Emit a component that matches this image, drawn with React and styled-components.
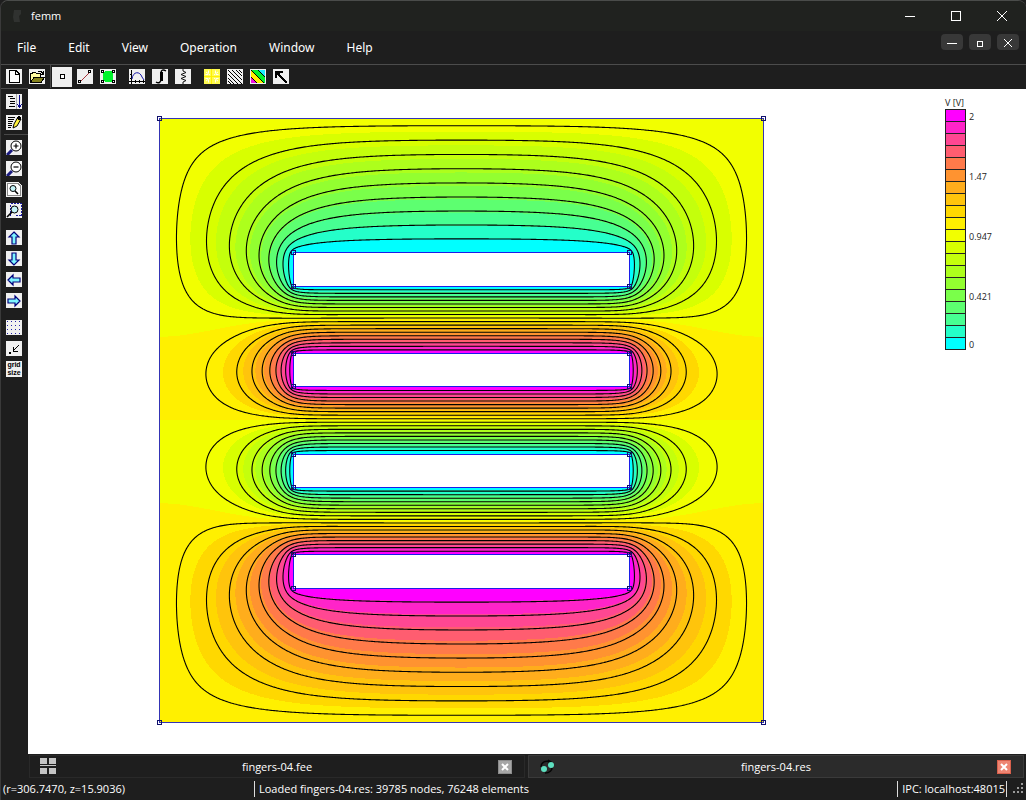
import React, { useMemo } from "react";
import styled, { createGlobalStyle } from "styled-components";

const BAND_COLORS = [
  "#00ffff",
  "#24ffc9",
  "#47ff92",
  "#5dff70",
  "#7aff4a",
  "#93ff30",
  "#adff1c",
  "#c4ff0c",
  "#d8ff00",
  "#f2ff00",
  "#fff000",
  "#ffd800",
  "#ffc40c",
  "#ffad1c",
  "#ff9330",
  "#ff7a4a",
  "#ff5d70",
  "#ff4792",
  "#ff24c9",
  "#ff00ff",
];

const LEGEND_LABELS = { 0: "2", 5: "1.47", 10: "0.947", 15: "0.421", 19: "0" };

// The box is 18 x 18 units, each finger is 10 x 1 units.
const UNITS = 18;
const CELLS = 24;
const HALF = (UNITS / 2) * CELLS;
const SIZE = 604;
const SCALE = SIZE / (HALF * 2);
const FINGERS = [4, 7, 10, 13];

// Laplace solution (successive over-relaxation) on the upper left quarter.
// Stored as potential minus one: zero on the frame, symmetric in x, odd in y.
function solveQuarter() {
  const n = HALF + 1;
  const u = new Float64Array(n * n);
  const fixed = new Uint8Array(n * n);
  for (let j = 0; j < n; j++) {
    for (let i = 0; i < n; i++) {
      const k = j * n + i;
      if (i === 0 || j === 0 || j === HALF) fixed[k] = 1;
      if (i >= 4 * CELLS) {
        if (j >= 4 * CELLS && j <= 5 * CELLS) {
          fixed[k] = 1;
          u[k] = -1;
        }
        if (j >= 7 * CELLS && j <= 8 * CELLS) {
          fixed[k] = 1;
          u[k] = 1;
        }
      }
    }
  }
  const omega = 2 / (1 + Math.sin(Math.PI / HALF));
  for (let step = 0; step < 500; step++) {
    for (let j = 1; j < HALF; j++) {
      for (let i = 1; i < n; i++) {
        const k = j * n + i;
        if (fixed[k]) continue;
        const right = i === HALF ? u[k - 1] : u[k + 1];
        const next = (u[k - 1] + right + u[k - n] + u[k + n]) / 4;
        u[k] += omega * (next - u[k]);
      }
    }
  }
  return u;
}

function buildField() {
  const u = solveQuarter();
  const n = HALF + 1;
  const at = (i, j) => {
    const x = i > HALF ? 2 * HALF - i : i;
    return j > HALF ? 1 - u[(2 * HALF - j) * n + x] : 1 + u[j * n + x];
  };

  const bands = BAND_COLORS.map(() => []);
  for (let y = 0; y < SIZE; y++) {
    const gy = (y + 0.5) / SCALE;
    const j = Math.floor(gy);
    const fy = gy - j;
    let start = 0;
    let current = -1;
    for (let x = 0; x <= SIZE; x++) {
      let band = -2;
      if (x < SIZE) {
        const gx = (x + 0.5) / SCALE;
        const i = Math.floor(gx);
        const fx = gx - i;
        const v =
          (at(i, j) * (1 - fx) + at(i + 1, j) * fx) * (1 - fy) +
          (at(i, j + 1) * (1 - fx) + at(i + 1, j + 1) * fx) * fy;
        band = Math.max(0, Math.min(19, Math.floor(v * 10)));
      }
      if (band !== current) {
        if (current >= 0) {
          bands[current].push(`M${start} ${y}h${x - start}v1h${start - x}z`);
        }
        start = x;
        current = band;
      }
    }
  }

  const lines = [];
  for (let m = 1; m < 19; m++) {
    const level = (2 * m) / 19;
    for (let j = 0; j < 2 * HALF; j++) {
      for (let i = 0; i < 2 * HALF; i++) {
        const a = at(i, j) - level;
        const b = at(i + 1, j) - level;
        const c = at(i + 1, j + 1) - level;
        const d = at(i, j + 1) - level;
        const points = [];
        if (a > 0 !== b > 0) points.push([i + a / (a - b), j]);
        if (b > 0 !== c > 0) points.push([i + 1, j + b / (b - c)]);
        if (c > 0 !== d > 0) points.push([i + d / (d - c), j + 1]);
        if (d > 0 !== a > 0) points.push([i, j + a / (a - d)]);
        for (let p = 0; p + 1 < points.length; p += 2) {
          const [s, t] = [points[p], points[p + 1]].map(([x, y]) =>
            [(x * SCALE).toFixed(2), (y * SCALE).toFixed(2)].join(" ")
          );
          lines.push(`M${s}L${t}`);
        }
      }
    }
  }

  return { bands: bands.map((runs) => runs.join("")), lines: lines.join("") };
}

function Node({ x, y }) {
  return (
    <rect
      x={x - 2}
      y={y - 2}
      width="4"
      height="4"
      fill="none"
      stroke="#10106c"
    />
  );
}

function FieldPlot() {
  const field = useMemo(buildField, []);
  const left = Math.round((4 * SIZE) / UNITS);
  const right = SIZE - left;
  const corners = [
    [0, 0],
    [SIZE, 0],
    [0, SIZE],
    [SIZE, SIZE],
  ];
  const fingers = FINGERS.map((row) => [
    Math.round((row * SIZE) / UNITS),
    Math.round(((row + 1) * SIZE) / UNITS),
  ]);
  return (
    <Plot
      viewBox="-3 -3 611 611"
      role="img"
      aria-label="Potential of fingers-04.res"
      shapeRendering="crispEdges"
    >
      {field.bands.map((d, index) => (
        <path key={BAND_COLORS[index]} d={d} fill={BAND_COLORS[index]} />
      ))}
      <g transform="translate(0.5 0.5)" fill="none">
        <path
          d={field.lines}
          stroke="#000"
          strokeWidth="1.1"
          strokeLinecap="round"
          shapeRendering="auto"
        />
        <rect width={SIZE} height={SIZE} stroke="#3434b4" />
        {fingers.map(([top, bottom]) => (
          <rect
            key={top}
            x={left}
            y={top}
            width={right - left}
            height={bottom - top}
            fill="#fff"
            stroke="#1c1ce8"
          />
        ))}
        {corners.map(([x, y]) => (
          <Node key={`${x}-${y}`} x={x} y={y} />
        ))}
        {fingers.flat().map((y) => (
          <React.Fragment key={y}>
            <Node x={left} y={y} />
            <Node x={right} y={y} />
          </React.Fragment>
        ))}
      </g>
    </Plot>
  );
}

function Magnifier({ children }) {
  return (
    <g fill="none" stroke="#000" shapeRendering="auto">
      <circle cx="10" cy="6" r="5" fill="#fff" />
      {children}
      <path d="M1 15L6 10" stroke="#1b1b80" strokeWidth="3" />
    </g>
  );
}

function BlockArrow({ angle }) {
  return (
    <path
      d="M8 2L13 7H10V14H6V7H3Z"
      transform={`rotate(${angle} 8 8)`}
      fill="#7df4ff"
      stroke="#00007c"
      strokeWidth="1.2"
      shapeRendering="auto"
    />
  );
}

const ICONS = {
  new: (
    <path d="M3.5 1.5H10L13.5 5V13.5H3.5ZM9.5 1.5V5.5H13.5" fill="#fff" stroke="#000" />
  ),
  open: (
    <g stroke="#000">
      <path d="M1.5 13.5V4.5H3L4 3.5H6.5L7.5 4.5H11.5V7.5" fill="#fffba0" />
      <path d="M1.5 13.5L5 8.5H15.5L12 13.5Z" fill="#85821c" />
      <path d="M9 2.5H12L14 4.5M14.5 2V5.5H11" fill="none" />
    </g>
  ),
  point: <rect x="6.5" y="5.5" width="4" height="4" fill="#fff" stroke="#000" />,
  segment: (
    <g fill="#fff" stroke="#000">
      <path d="M3 13L13 3" stroke="#a8323a" />
      <rect x="1.5" y="11.5" width="2" height="2" />
      <rect x="11.5" y="1.5" width="2" height="2" />
    </g>
  ),
  block: (
    <g fill="#fff" stroke="#000">
      <path d="M5 2H11L13 4V11L11 13H5L3 11V4Z" fill="#00f52c" stroke="none" />
      <rect x="1.5" y="1.5" width="2" height="2" />
      <rect x="12.5" y="1.5" width="2" height="2" />
      <rect x="1.5" y="11.5" width="2" height="2" />
      <rect x="12.5" y="11.5" width="2" height="2" />
    </g>
  ),
  graph: (
    <g fill="none">
      <path d="M2.5 1V15M0 12.5H16M1 5H3M1 9H3M6.5 11V14M10.5 11V14M14.5 11V14" stroke="#000" />
      <path d="M3 10C4 2 11 2 13 8L15 11" stroke="#1414a8" shapeRendering="auto" />
    </g>
  ),
  integral: (
    <g fill="none" stroke="#000" shapeRendering="auto">
      <path d="M14 2C11 0 9 1 9 4V10C9 13 7 15 4 13" strokeWidth="1.5" />
      <path d="M9.5 3V12" strokeWidth="3" />
    </g>
  ),
  circuit: (
    <path
      d="M8 0V2L11 3.500L6 5.500L11 7.500L6 9.500L11 11.500L8 13V15"
      fill="none"
      stroke="#111"
      shapeRendering="auto"
    />
  ),
  mesh: (
    <g fill="none">
      <path d="M0 0H16V15H0Z" fill="#fffb50" />
      <path
        d="M2 3L6 6M14 3L10 6M2 12L6 9M14 12L10 9M4.500 1.500V4M11.500 1.500V4M4.500 11V13.500M11.500 11V13.500M1.500 5.500H4M12 5.500H14.500M1.500 9.500H4M12 9.500H14.500"
        stroke="#fffff0"
        shapeRendering="auto"
      />
      <path d="M0 7.500H16M7.500 0V15" stroke="#fff000" />
    </g>
  ),
  contour: (
    <path
      d="M1 1L15 15M5 1L15 11M9 1L15 7M12 1L15 4M1 5L11 15M1 9L7 15M1 12L4 15"
      stroke="#000"
      strokeWidth="1"
      fill="none"
    />
  ),
  density: (
    <g>
      <path d="M1 1H15V14H1Z" fill="#00f52c" />
      <path d="M8 1H15V8Z" fill="#1ceeff" />
      <path d="M1 2L13 14H7L1 8Z" fill="#fff200" />
      <path d="M1 8L7 14H1Z" fill="#f012e0" />
      <path d="M1 1L14 14M8 1L15 8M1 8L7 14" stroke="#000" />
    </g>
  ),
  vector: (
    <path d="M3 3L14 14M3 9V2.500H10M3 6L7 3" fill="none" stroke="#000" strokeWidth="2" />
  ),
  list: (
    <g fill="none" stroke="#000">
      <path d="M2 2.500H7M4 4.500H9M4 7.500H9M4 9.500H9M3 12.500H9" />
      <path d="M10.500 0V15" stroke="#aaa" />
      <path d="M13.500 1V12M11.500 10V11M12.500 11V13M14.500 11V13M15.500 10V11M13.500 12V14" stroke="#101090" />
    </g>
  ),
  edit: (
    <g stroke="#000" fill="none">
      <path d="M2 2.500H9M2 4.500H8M2 6.500H7M2 8.500H6M2 10.500H6M2 12.500H5" />
      <path d="M7 13L8 9L12 2L15 4L11 11Z" fill="#fff23c" shapeRendering="auto" />
      <path d="M11 3L13 1L15 3L14 5Z" fill="#000" />
    </g>
  ),
  zoomIn: (
    <Magnifier>
      <path d="M7.500 6H12.500M10 3.500V8.500" strokeWidth="1.200" />
    </Magnifier>
  ),
  zoomOut: (
    <Magnifier>
      <path d="M7.500 6H12.500" strokeWidth="1.200" />
    </Magnifier>
  ),
  zoomPage: (
    <g fill="none" stroke="#000">
      <path d="M1.500 1.500H12L14.500 4V13.500H1.500Z" fill="#fff" stroke="#888" />
      <path d="M12 0H16V4Z" fill="#1e1e1e" stroke="none" />
      <circle cx="7" cy="6.500" r="3" fill="#c5f4f8" shapeRendering="auto" />
      <path d="M9 9L12 12" strokeWidth="1.600" shapeRendering="auto" />
    </g>
  ),
  zoomWindow: (
    <g fill="none" stroke="#000">
      <path d="M4.500 12.500V.5H15.500V12.500H9" stroke="#1818a0" strokeDasharray="2 1" />
      <circle cx="8.500" cy="6.500" r="3.500" fill="#c5f4f8" shapeRendering="auto" />
      <path d="M1 14L6 9" strokeWidth="1.600" shapeRendering="auto" />
    </g>
  ),
  up: <BlockArrow angle={0} />,
  down: <BlockArrow angle={180} />,
  left: <BlockArrow angle={-90} />,
  right: <BlockArrow angle={90} />,
  grid: (
    <path
      d="M1 1.500H16M1 5.500H16M1 9.500H16M1 13.500H16"
      stroke="#2222a8"
      strokeDasharray="1 3"
    />
  ),
  snap: (
    <path d="M3 11.500H5M3 12.500H5M7 10L13 4M7.500 6V10.500H12" fill="none" stroke="#000" />
  ),
};

function ToolIcon({ name }) {
  return (
    <Glyph viewBox="0 0 16 15" shapeRendering="crispEdges" aria-hidden="true">
      {ICONS[name]}
    </Glyph>
  );
}

function ToolGroup({ tools, vertical }) {
  return (
    <Group $vertical={vertical}>
      {tools.map(([name, label]) => (
        <ToolButton key={name} aria-label={label} $pressed={name === "point"}>
          {name === "gridSize" ? (
            <GridSize>
              <span>grid</span>
              <span>size</span>
            </GridSize>
          ) : (
            <ToolIcon name={name} />
          )}
        </ToolButton>
      ))}
    </Group>
  );
}

const MENUS = ["File", "Edit", "View", "Operation", "Window", "Help"];

const FILE_TOOLS = [
  ["new", "New"],
  ["open", "Open"],
];
const MODE_TOOLS = [
  ["point", "Operate on points"],
  ["segment", "Operate on segments"],
  ["block", "Operate on blocks"],
];
const RESULT_TOOLS = [
  ["graph", "Plot graph"],
  ["integral", "Integrate"],
  ["circuit", "Conductor properties"],
];
const VIEW_TOOLS = [
  ["mesh", "Show mesh"],
  ["contour", "Contour plot"],
  ["density", "Density plot"],
  ["vector", "Vector plot"],
];
const OUTPUT_TOOLS = [
  ["list", "Output window"],
  ["edit", "Console"],
];
const ZOOM_TOOLS = [
  ["zoomIn", "Zoom in"],
  ["zoomOut", "Zoom out"],
  ["zoomPage", "Zoom to page"],
  ["zoomWindow", "Zoom window"],
];
const PAN_TOOLS = [
  ["up", "Pan up"],
  ["down", "Pan down"],
  ["left", "Pan left"],
  ["right", "Pan right"],
];
const GRID_TOOLS = [
  ["grid", "Show grid"],
  ["snap", "Snap to grid"],
  ["gridSize", "Grid size"],
];

export default function App() {
  return (
    <>
      <GlobalStyle />
      <Shell>
        <TitleBar>
          <svg width="12" height="14" viewBox="0 0 12 14" aria-hidden="true">
            <path d="M3 1H10V5L8 7L9 13H3L2 8Z" fill="#303230" />
          </svg>
          <AppName>femm</AppName>
          <CaptionButton aria-label="Minimize">
            <svg width="12" height="12" stroke="#fff" fill="none">
              <path d="M1 6.500H11" />
            </svg>
          </CaptionButton>
          <CaptionButton aria-label="Maximize">
            <svg width="12" height="12" stroke="#fff" fill="none">
              <rect x="1.500" y="1.500" width="9" height="9" />
            </svg>
          </CaptionButton>
          <CaptionButton aria-label="Close">
            <svg width="12" height="12" stroke="#fff" fill="none">
              <path d="M1 1L11 11M11 1L1 11" />
            </svg>
          </CaptionButton>
        </TitleBar>
        <MenuBar>
          {MENUS.map((menu) => (
            <MenuButton key={menu}>{menu}</MenuButton>
          ))}
          <ChildButtons>
            <ChildButton aria-label="Minimize document">
              <svg width="12" height="12" stroke="#fff" fill="none">
                <path d="M1 7.500H11" />
              </svg>
            </ChildButton>
            <ChildButton aria-label="Restore document">
              <svg width="12" height="12" stroke="#fff" fill="none">
                <rect x="3.500" y="5.500" width="5" height="5" />
              </svg>
            </ChildButton>
            <ChildButton aria-label="Close document">
              <svg width="12" height="12" stroke="#fff" fill="none">
                <path d="M2 3L10 11M10 3L2 11" />
              </svg>
            </ChildButton>
          </ChildButtons>
        </MenuBar>
        <ToolBar>
          <ToolGroup tools={FILE_TOOLS} />
          <ToolDivider />
          <ToolGroup tools={MODE_TOOLS} />
          <ToolGap />
          <ToolGroup tools={RESULT_TOOLS} />
          <ToolGap />
          <ToolGroup tools={VIEW_TOOLS} />
        </ToolBar>
        <Workspace>
          <SideBar>
            <ToolGroup tools={OUTPUT_TOOLS} vertical />
            <SideDivider />
            <ToolGroup tools={ZOOM_TOOLS} vertical />
            <SideGap />
            <ToolGroup tools={PAN_TOOLS} vertical />
            <SideGap />
            <ToolGroup tools={GRID_TOOLS} vertical />
          </SideBar>
          <Document>
            <FieldPlot />
            <Legend>
              <div>V [V]</div>
              {[...BAND_COLORS].reverse().map((color, index) => (
                <ScaleRow key={color}>
                  <Swatch $color={color} />
                  <ScaleValue>{LEGEND_LABELS[index]}</ScaleValue>
                </ScaleRow>
              ))}
            </Legend>
          </Document>
        </Workspace>
        <TabBar>
          <Tab>
            <svg width="16" height="17" fill="#c4c4c4" aria-hidden="true">
              <path d="M0 0H7V6H0ZM9 0H16V6H9ZM0 7H16V8H0ZM0 10H7V16H0ZM9 10H16V16H9Z" />
            </svg>
            <TabName>fingers-04.fee</TabName>
            <TabClose aria-label="Close fingers-04.fee">
              <svg width="8" height="8" stroke="#fff" strokeWidth="2">
                <path d="M1 1L7 7M7 1L1 7" />
              </svg>
            </TabClose>
          </Tab>
          <Tab $active>
            <svg width="16" height="16" fill="none" aria-hidden="true">
              <path d="M2 8C2 3 7 1 11 3M9 1L12 3L9 5M6 14C11 14 13 11 13 9" stroke="#050505" strokeWidth="1.500" />
              <circle cx="5" cy="10" r="3" fill="#5ee0c0" />
              <circle cx="12" cy="6" r="3" fill="#5ee0c0" />
            </svg>
            <TabName>fingers-04.res</TabName>
            <TabClose aria-label="Close fingers-04.res" $active>
              <svg width="8" height="8" stroke="#fff" strokeWidth="2">
                <path d="M1 1L7 7M7 1L1 7" />
              </svg>
            </TabClose>
          </Tab>
        </TabBar>
        <StatusBar>
          <Coordinates>(r=306.7470, z=15.9036)</Coordinates>
          <Message>Loaded fingers-04.res: 39785 nodes, 76248 elements</Message>
          <Server>IPC: localhost:48015</Server>
          <svg width="12" height="12" fill="#9a9a9a" aria-hidden="true">
            <path d="M8 0h2v2h-2zM8 4h2v2h-2zM8 8h2v2h-2zM4 4h2v2h-2zM4 8h2v2h-2zM0 8h2v2h-2z" />
          </svg>
        </StatusBar>
      </Shell>
    </>
  );
}

const GlobalStyle = createGlobalStyle`
  * {
    box-sizing: border-box;
  }
  body {
    margin: 0;
    background: #1e1e1e;
    color: #fff;
    font-family: "Open Sans", "Noto Sans", sans-serif;
    font-size: 11px;
    line-height: 16px;
  }
  button {
    padding: 0;
    border: 0;
    background: none;
    color: inherit;
    font: inherit;
  }
  svg {
    display: block;
    flex: none;
  }
`;

const Shell = styled.div`
  display: flex;
  flex-direction: column;
  min-height: 100vh;
  border-top: 1px solid #4a4c4a;
  border-left: 1px solid #3a3a3a;
  border-radius: 8px 8px 0 0;
`;

const TitleBar = styled.header`
  display: flex;
  align-items: center;
  height: 30px;
  padding: 0 1px 0 10px;
  background: #20221f;
  border-radius: 8px 8px 0 0;
`;

const AppName = styled.span`
  flex: 1;
  padding-left: 8px;
`;

const CaptionButton = styled.button`
  display: flex;
  align-items: center;
  justify-content: center;
  width: 46px;
  height: 30px;
`;

const MenuBar = styled.nav`
  display: flex;
  align-items: center;
  gap: 32px;
  height: 33px;
  padding: 0 7px 0 16px;
`;

const MenuButton = styled.button`
  font-family: "Noto Sans", sans-serif;
  font-size: 12px;
`;

const ChildButtons = styled.div`
  display: flex;
  gap: 6px;
  margin: 0 0 12px auto;
`;

const ChildButton = styled.button`
  display: flex;
  align-items: center;
  justify-content: center;
  width: 22px;
  height: 16px;
  border-radius: 4px;
  background: #383838;
`;

const ToolBar = styled.div`
  display: flex;
  align-items: center;
  height: 24px;
  padding-left: 3px;
  border-top: 1px solid #4c4c4c;
`;

const Group = styled.div`
  display: flex;
  flex-direction: ${(props) => (props.$vertical ? "column" : "row")};
  gap: ${(props) => (props.$vertical ? "1px" : "3px")};
`;

const ToolButton = styled.button`
  display: flex;
  align-items: center;
  justify-content: center;
  width: 20px;
  height: 20px;
  background: ${(props) => (props.$pressed ? "#f0f0f0" : "none")};
`;

const Glyph = styled.svg`
  width: 16px;
  height: 15px;
  background: #f0f0f0;
`;

const GridSize = styled.span`
  display: flex;
  flex-direction: column;
  align-items: center;
  width: 16px;
  height: 16px;
  background: #f0f0f0;
  color: #000;
  font-family: "Liberation Sans", sans-serif;
  font-size: 7px;
  font-weight: 700;
  line-height: 8px;
`;

const ToolDivider = styled.div`
  width: 1px;
  height: 100%;
  margin: 0 1px 0 3px;
  background: #484848;
`;

const ToolGap = styled.div`
  width: 9px;
`;

const Workspace = styled.main`
  display: flex;
  flex: 1;
`;

const SideBar = styled.aside`
  display: flex;
  flex-direction: column;
  width: 27px;
  padding: 2px 0 0 3px;
  border-top: 1px solid #4c4c4c;
`;

const SideDivider = styled.div`
  height: 1px;
  margin: 2px 0;
  background: #484848;
`;

const SideGap = styled.div`
  height: 7px;
`;

const Document = styled.section`
  display: flex;
  flex: 1;
  align-items: flex-start;
  justify-content: space-between;
  margin-top: 1px;
  padding: 26px 0 20px 128px;
  background: #fff;
`;

const Plot = styled.svg`
  width: 611px;
  height: 611px;
`;

const Legend = styled.div`
  width: 81px;
  margin-top: -19px;
  color: #222;
  font-size: 9px;
  line-height: 13px;
`;

const ScaleRow = styled.div`
  display: flex;
  gap: 3px;
  height: 12px;
`;

const Swatch = styled.span`
  width: 21px;
  height: 13px;
  border: 1px solid #222;
  background: ${(props) => props.$color};
`;

const ScaleValue = styled.span`
  padding-top: 1px;
`;

const TabBar = styled.div`
  display: flex;
  gap: 3px;
  padding: 1px 2px 1px 28px;
`;

const Tab = styled.div`
  display: flex;
  flex: 1;
  align-items: center;
  height: 23px;
  padding: 0 12px 0 10px;
  border: 1px solid ${(props) => (props.$active ? "#3a3a3a" : "#292929")};
  background: ${(props) => (props.$active ? "#2b2b2b" : "#1e1e1e")};
`;

const TabName = styled.button`
  flex: 1;
`;

const TabClose = styled.button`
  display: flex;
  align-items: center;
  justify-content: center;
  width: 14px;
  height: 14px;
  border: 1px solid ${(props) => (props.$active ? "#d8604c" : "#8c8c8c")};
  background: ${(props) => (props.$active ? "#ee8572" : "#a6a6a6")};
`;

const StatusBar = styled.footer`
  display: flex;
  align-items: center;
  height: 21px;
  padding: 0 1px 1px 2px;
`;

const Coordinates = styled.span`
  width: 251px;
`;

const Message = styled.span`
  flex: 1;
  padding-left: 4px;
  border-left: 1px solid #ddd;
`;

const Server = styled.span`
  margin-right: 6px;
  padding: 0 1px 0 4px;
  border: solid #ddd;
  border-width: 0 1px;
`;
